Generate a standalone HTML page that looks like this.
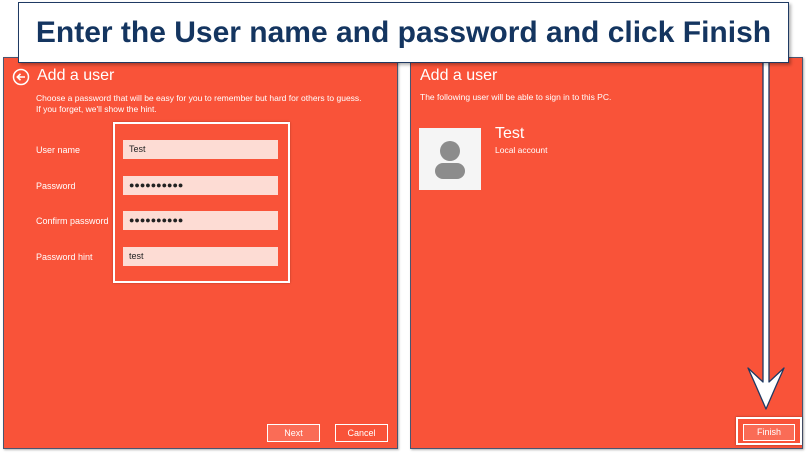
<!DOCTYPE html>
<html><head><meta charset="utf-8"><style>
*{margin:0;padding:0;box-sizing:border-box}
body{width:806px;height:454px;background:#fff;position:relative;overflow:hidden;font-family:"Liberation Sans",sans-serif;color:#fff}
.panel{position:absolute;background:#f95339;border:1px solid #4a5570;box-shadow:1px 1px 2px rgba(0,0,0,.3)}
.title{position:absolute;left:18px;top:2px;width:771px;height:61px;background:#fff;border:1px solid #1f3a63;box-shadow:2px 2px 3px rgba(0,0,0,.3);z-index:5;color:#143560;font-size:30px;font-weight:bold;font-family:"Liberation Sans",sans-serif;line-height:59px;text-align:center;white-space:nowrap;overflow:hidden}
.h{position:absolute;font-size:16px;font-weight:300}
.s{position:absolute;font-size:8.5px;line-height:11px}
.lbl{position:absolute;left:36px;font-size:9px}
.inp{position:absolute;left:123px;width:155px;height:19px;background:#fddcd4;color:#222;font-size:9px;padding-left:6px;line-height:19px}
.dots{font-size:9px}
.btn{position:absolute;border:1px solid #fff;font-size:9px;text-align:center}
</style></head><body>
<div class="title">Enter the User name and password and click Finish</div>

<div class="panel" style="left:3px;top:57px;width:395px;height:392px"></div>
<div class="panel" style="left:410px;top:57px;width:393px;height:392px"></div>

<svg style="position:absolute;left:12px;top:68px" width="18" height="18" viewBox="0 0 18 18"><circle cx="9" cy="9" r="7.5" fill="none" stroke="#fff" stroke-width="1.5"/><path d="M13 9H5.5M8.5 5.8L5.3 9l3.2 3.2" fill="none" stroke="#fff" stroke-width="1.6"/></svg>
<div class="h" style="left:37px;top:67px">Add a user</div>
<div class="s" style="left:36px;top:93px">Choose a password that will be easy for you to remember but hard for others to guess.<br>If you forget, we'll show the hint.</div>

<div style="position:absolute;left:113px;top:122px;width:177px;height:161px;border:2px solid #fff;box-shadow:0 0 2px rgba(0,0,0,.3)"></div>
<div class="lbl" style="top:145px">User name</div>
<div class="lbl" style="top:181px">Password</div>
<div class="lbl" style="top:216px">Confirm password</div>
<div class="lbl" style="top:252px">Password hint</div>
<div class="inp" style="top:140px">Test</div>
<div class="inp dots" style="top:176px">●●●●●●●●●●</div>
<div class="inp dots" style="top:211px">●●●●●●●●●●</div>
<div class="inp" style="top:247px">test</div>

<div class="btn" style="left:267px;top:424px;width:53px;height:18px;line-height:16px;background:rgba(255,255,255,.15)">Next</div>
<div class="btn" style="left:335px;top:424px;width:53px;height:18px;line-height:16px">Cancel</div>

<div class="h" style="left:420px;top:67px">Add a user</div>
<div class="s" style="left:420px;top:92px">The following user will be able to sign in to this PC.</div>
<div style="position:absolute;left:419px;top:128px;width:62px;height:62px;background:#f5f5f5">
<svg width="62" height="62" viewBox="0 0 62 62"><circle cx="31" cy="23" r="10" fill="#8c8c8c"/><rect x="16" y="35" width="30" height="16" rx="8" fill="#8c8c8c"/></svg></div>
<div style="position:absolute;left:495px;top:125px;font-size:16px;font-weight:300">Test</div>
<div class="s" style="left:495px;top:145px">Local account</div>

<div style="position:absolute;left:736px;top:417px;width:66px;height:28px;border:2px solid #fff;box-shadow:0 0 2px rgba(0,0,0,.4)"></div>
<div class="btn" style="left:743px;top:424px;width:52px;height:17px;line-height:15px;background:rgba(255,255,255,.15)">Finish</div>

<svg style="position:absolute;left:740px;top:60px;z-index:4" width="50" height="356" viewBox="0 0 50 356">
<path d="M23 0H29V322L44 308L36 326L26 349L16 326L8 308L23 322Z" fill="#fff" stroke="#1f3a63" stroke-width="1.3" stroke-linejoin="round"/>
</svg>
</body></html>
